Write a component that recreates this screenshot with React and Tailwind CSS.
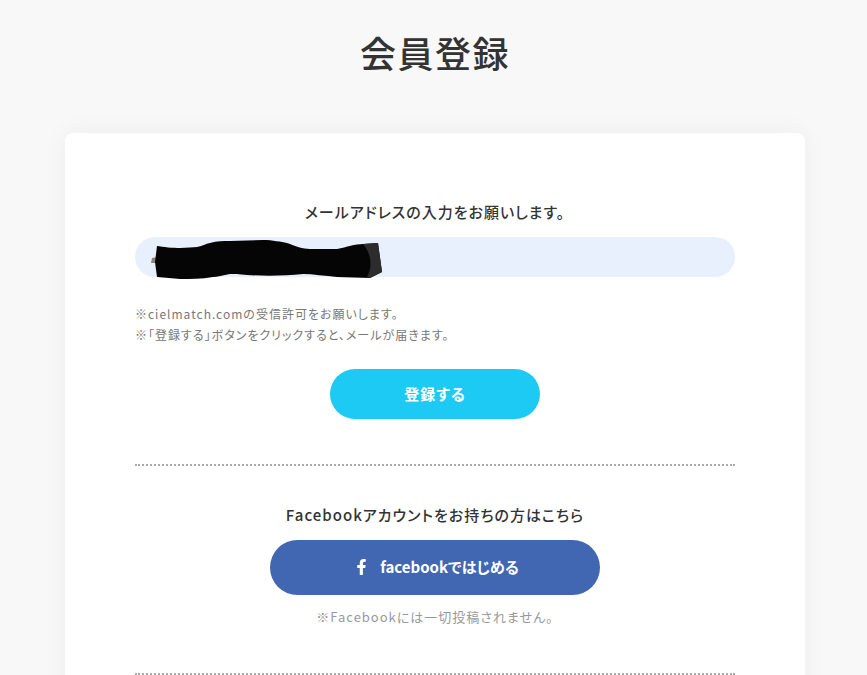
import React from 'react';

const App = () => {
  return (
    <div className="h-screen overflow-hidden bg-[#f8f8f8] font-['Noto_Sans_CJK_JP','Noto_Sans',sans-serif] text-[#333] [font-feature-settings:'palt']">
      <div className="w-[870px]">
        <h1 className="pt-[25px] text-center text-[36px] leading-[54px] font-medium tracking-[1.5px]">会員登録</h1>

        <div className="mx-auto mt-[54px] w-[740px] rounded-lg bg-white px-[70px] pt-[69px] pb-10 shadow-[0_0_24px_rgba(0,0,0,0.05)]">
          <p className="text-center text-[15px] leading-5 font-medium tracking-[1px]">メールアドレスの入力をお願いします。</p>

          <div className="relative mt-[15px] h-10 rounded-full bg-[#e8f0fe]">
            {/* blacked-out address */}
            <svg className="absolute top-0 left-0 overflow-visible" width="260" height="40" viewBox="0 0 260 40">
              <path d="M17 21 L22 20 L22 26 L16 26 Z" fill="#8a8674" />
              <path
                d="M22 9 C28 10 38 11 45 11 C52 11 58 10 62 10 C68 9 72 6 75 6 C82 4 88 4 95 4 L128 3 C138 3 146 5 152 6 C160 9 168 12 175 12 C185 12 192 12 202 12 C212 10 220 7 228 7 L243 6 L247 35 L235 41 C225 41 212 40 202 40 C190 39 178 37 168 37 C150 39 128 39 112 38 C104 37 98 37 95 37 C88 38 82 40 78 40 C66 42 56 42 45 42 C38 41 30 41 22 40 L20 25 Z"
                fill="#050505"
              />
              <path d="M228 7 L243 6 L247 35 L235 41 L232 40 C238 30 236 16 228 7 Z" fill="#2c2c2c" />
            </svg>
          </div>

          <div className="mt-[26px] text-xs leading-[21px] tracking-[1px] text-[#777]">
            <p>※cielmatch.comの受信許可をお願いします。</p>
            <p>※「登録する」ボタンをクリックすると、メールが届きます。</p>
          </div>

          <div className="mt-6 flex justify-center">
            <button className="h-[50px] w-[210px] rounded-full bg-[#1ccaf4] text-[15px] font-bold tracking-[1px] text-white">
              登録する
            </button>
          </div>

          <div className="mt-[45px] border-t-2 border-dotted border-[#aaa]" />

          <p className="mt-[39px] text-center text-[15px] leading-5 font-medium tracking-[1px]">Facebookアカウントをお持ちの方はこちら</p>

          <div className="mt-[15px] flex justify-center">
            <button className="flex h-[55px] w-[330px] items-center justify-center gap-[13px] rounded-full bg-[#4267b2] text-[15px] font-bold text-white">
              <svg className="-mt-px ml-[5px]" width="11" height="16" viewBox="0 0 320 512" fill="currentColor">
                <path d="M279 288l14-93h-89v-60c0-25 12-50 52-50h41V6s-37-6-72-6c-73 0-121 44-121 125v70H23v93h81v224h100V288z" />
              </svg>
              facebookではじめる
            </button>
          </div>

          <p className="mt-[12px] text-center text-[13px] leading-5 tracking-[1px] text-[#999]">※Facebookには一切投稿されません。</p>

          <div className="mt-[46px] border-t-2 border-dotted border-[#aaa]" />
        </div>
      </div>
    </div>
  );
};

export default App;
